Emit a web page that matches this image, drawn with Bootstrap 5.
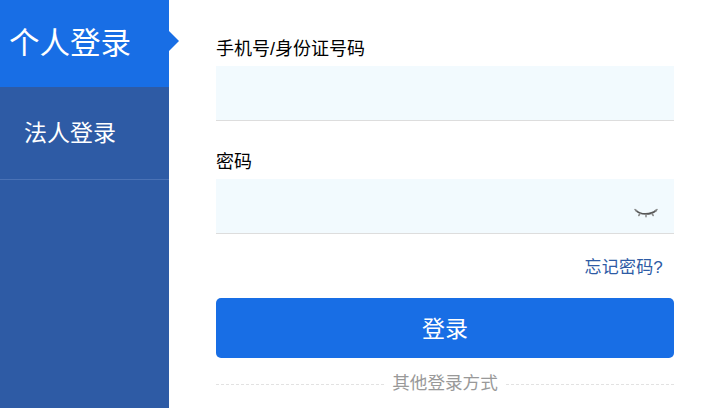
<!DOCTYPE html>
<html lang="zh-CN">
<head>
<meta charset="utf-8">
<title>登录</title>
<link href="https://cdn.jsdelivr.net/npm/bootstrap@5.3.0/dist/css/bootstrap.min.css" rel="stylesheet">
<style>
html,body{height:408px;overflow:hidden;background:#fff;}
body{font-family:"Liberation Sans","Noto Sans CJK SC",sans-serif;color:#000;}
.shell{height:408px;}
.side{width:169px;background:#2e5ba5;flex:none;}
.tab-on{height:87px;background:#186ee5;color:#fff;font-size:30.5px;line-height:1;padding-left:9px;position:relative;}
.tab-on::after{content:"";position:absolute;left:169px;top:31px;border-left:10px solid #186ee5;border-top:10px solid transparent;border-bottom:10px solid transparent;}
.tab-off{height:93px;color:#fff;font-size:23px;line-height:1;padding-left:24px;border-bottom:1px solid #4a72b6;}
.pane{width:458px;margin-left:47px;padding-top:37px;}
.lbl{font-size:18px;line-height:24px;height:29px;margin:0;display:block;}
.fld{height:55px;background:#f2fafe;border:0;border-bottom:1px solid #ddd;border-radius:0;box-shadow:none;}
.fld:focus{background:#f2fafe;box-shadow:none;border-color:#ddd;}
.gap1{margin-bottom:29px;}
.eye{position:absolute;right:16px;top:28px;}
.forgot{font-size:17px;line-height:24px;color:#2e5ba5;text-decoration:none;margin-right:11px;letter-spacing:.2px;}
.forgot-row{height:64px;padding-top:22px;}
.go{height:60px;background:#186ee5;border:0;border-radius:5px;font-size:23px;color:#fff;padding:3px 0 0;}
.go:hover{background:#186ee5;color:#fff;}
.other{margin-top:14px;color:#999;font-size:17.6px;line-height:22px;}
.sep{padding:0 8px;}
.dash{flex:1;border-top:1px dashed #e2e2e2;margin-top:2px;}
</style>
</head>
<body>
<div class="shell d-flex">
  <div class="side">
    <div class="tab-on d-flex align-items-center">个人登录</div>
    <div class="tab-off d-flex align-items-center">法人登录</div>
  </div>
  <form class="pane">
    <label class="lbl" for="u">手机号/身份证号码</label>
    <input class="form-control fld gap1" id="u" type="text">
    <label class="lbl" for="p">密码</label>
    <div class="position-relative">
      <input class="form-control fld" id="p" type="password">
      <svg class="eye" width="24" height="12" viewBox="0 0 24 12" fill="none" stroke="#555" stroke-width="1.8" stroke-linecap="round"><path d="M2 3.5C6 8 17 8 22 3.5"/><path d="M2.5 4 1 2.5M6 6.5 4.8 8.5M12 7.5V9.8M18 6.5l1.2 2M21.5 4 23 2.5" stroke="#888" stroke-width="1.5"/></svg>
    </div>
    <div class="forgot-row d-flex justify-content-end"><a class="forgot" href="#">忘记密码?</a></div>
    <button class="btn go w-100" type="button">登录</button>
    <div class="other d-flex align-items-center">
      <span class="dash"></span><span class="sep">其他登录方式</span><span class="dash"></span>
    </div>
  </form>
</div>
<script src="https://cdn.jsdelivr.net/npm/bootstrap@5.3.0/dist/js/bootstrap.bundle.min.js"></script>
</body>
</html>
